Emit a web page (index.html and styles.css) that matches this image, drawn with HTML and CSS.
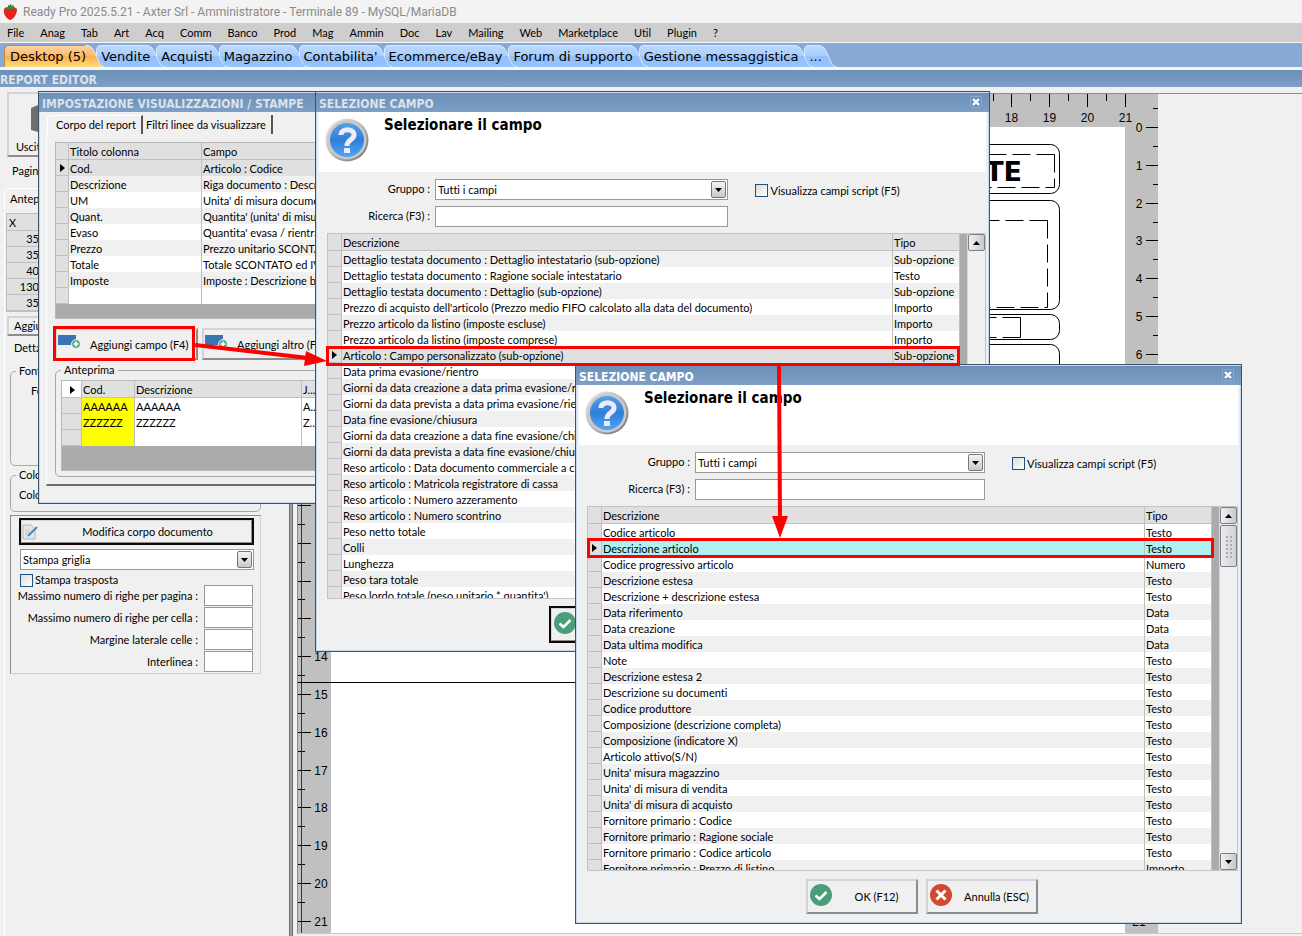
FILE: index.html
```
<!DOCTYPE html>
<html lang="it">
<head>
  <meta charset="UTF-8">
  <title>Ready Pro 2025.5.21</title>
  <link rel="stylesheet" href="styles.css">
</head>
<body>
  <svg class="defs" aria-hidden="true">
    <defs>
      <linearGradient id="tabBlue" x1="0" y1="0" x2="0" y2="1">
        <stop offset="0" stop-color="#bcd9ff"/>
        <stop offset="0.48" stop-color="#a8cdfb"/>
        <stop offset="0.52" stop-color="#94c0fa"/>
        <stop offset="1" stop-color="#94c3ff"/>
      </linearGradient>
      <linearGradient id="tabOrange" x1="0" y1="0" x2="0" y2="1">
        <stop offset="0" stop-color="#fdd3a0"/>
        <stop offset="0.45" stop-color="#fdbb70"/>
        <stop offset="0.52" stop-color="#fdac50"/>
        <stop offset="1" stop-color="#ffdd77"/>
      </linearGradient>
      <linearGradient id="ring" x1="0" y1="0" x2="1" y2="1">
        <stop offset="0" stop-color="#f2f2f2"/>
        <stop offset="0.5" stop-color="#b9b9b9"/>
        <stop offset="1" stop-color="#6b6b6b"/>
      </linearGradient>
      <linearGradient id="ball" x1="0" y1="0" x2="0" y2="1">
        <stop offset="0" stop-color="#5a9fe4"/>
        <stop offset="0.5" stop-color="#2f7fd8"/>
        <stop offset="1" stop-color="#4fa6f5"/>
      </linearGradient>
      <symbol id="tail" viewBox="0 0 20 22" preserveAspectRatio="none">
        <path d="M0 0 C7 0 8 4 11 10 C14 17 15 21 20 22 L0 22 Z"/>
        <path d="M0 .5 C7 .5 8 4 11 10 C14 17 15 21 20 22" fill="none" stroke="#d9e9ff"/>
      </symbol>
      <symbol id="question" viewBox="0 0 44 44">
        <circle cx="22" cy="22" r="21.5" fill="url(#ring)"/>
        <circle cx="22" cy="22" r="19.5" fill="#c9c9c9"/>
        <circle cx="22" cy="22" r="17" fill="url(#ball)"/>
        <path d="M16 17 C16 10 29 10 29 17 C29 22 22 21 22 28" fill="none" stroke="#eeecfb" stroke-width="5"/>
        <rect x="19" y="30" width="6" height="5" fill="#eeecfb"/>
      </symbol>
      <symbol id="ok" viewBox="0 0 22 22">
        <circle cx="11" cy="11" r="11" fill="#4a9e7c"/>
        <path d="M5.5 11.5 L9.5 15 L16.5 8" fill="none" stroke="#fff" stroke-width="2.6"/>
      </symbol>
      <symbol id="cancel" viewBox="0 0 22 22">
        <circle cx="11" cy="11" r="11" fill="#cf4a2e"/>
        <path d="M6.5 6.5 L15.5 15.5 M15.5 6.5 L6.5 15.5" stroke="#fff" stroke-width="3"/>
      </symbol>
      <symbol id="addcol" viewBox="0 0 22 14">
        <rect width="18" height="10" fill="#3a74b5"/>
        <circle cx="18" cy="9" r="4.5" fill="#5aaa88" stroke="#e4f0ea"/>
        <path d="M18 6.5 V11.5 M15.5 9 H20.5" stroke="#fff" stroke-width="1.6"/>
      </symbol>
      <symbol id="close" viewBox="0 0 12 12">
        <rect x=".5" y=".5" width="11" height="11" rx="1" fill="#6a92bd" stroke="#8badcf"/>
        <path d="M3 3 L9 9 M9 3 L3 9" stroke="#fff" stroke-width="2.4"/>
      </symbol>
      <symbol id="down" viewBox="0 0 7 4"><path d="M0 0 H7 L3.5 4 Z"/></symbol>
      <symbol id="up" viewBox="0 0 7 4"><path d="M0 4 H7 L3.5 0 Z"/></symbol>
    </defs>
  </svg>

  <header class="titlebar">
    <svg width="16" height="18" viewBox="0 0 16 18">
      <path d="M2 6 C4 3 12 3 15 6 C15 11 12 16 8 17 C4 15 1 11 2 6 Z" fill="#e3241c"/>
      <path d="M3 5 L6 4 L6 2 L9 3 L11 2 L13 5 L9 6 L6 6 Z" fill="#2f8f2f"/>
      <path d="M8 4 L9 1" stroke="#2f6f2f"/>
    </svg>
    <span>Ready Pro 2025.5.21 - Axter Srl - Amministratore - Terminale 89 - MySQL/MariaDB</span>
  </header>

  <nav class="menubar">
    <a href="#">File</a><a href="#">Anag</a><a href="#">Tab</a><a href="#">Art</a><a href="#">Acq</a><a href="#">Comm</a><a href="#">Banco</a><a href="#">Prod</a><a href="#">Mag</a><a href="#">Ammin</a><a href="#">Doc</a><a href="#">Lav</a><a href="#">Mailing</a><a href="#">Web</a><a href="#">Marketplace</a><a href="#">Util</a><a href="#">Plugin</a><a href="#">?</a>
  </nav>

  <nav class="main-tabs">
    <a href="#" class="active"><svg class="tail"><use href="#tail"/></svg>Desktop (5)</a>
    <a href="#"><svg class="tail"><use href="#tail"/></svg>Vendite</a>
    <a href="#"><svg class="tail"><use href="#tail"/></svg>Acquisti</a>
    <a href="#"><svg class="tail"><use href="#tail"/></svg>Magazzino</a>
    <a href="#"><svg class="tail"><use href="#tail"/></svg>Contabilita'</a>
    <a href="#"><svg class="tail"><use href="#tail"/></svg>Ecommerce/eBay</a>
    <a href="#"><svg class="tail"><use href="#tail"/></svg>Forum di supporto</a>
    <a href="#"><svg class="tail"><use href="#tail"/></svg>Gestione messaggistica</a>
    <a href="#"><svg class="tail"><use href="#tail"/></svg>...</a>
  </nav>

  <h1 class="bar">REPORT EDITOR</h1>

  <main class="workspace">
    <aside class="side">
      <button class="btn exit">
        <svg width="30" height="32" viewBox="0 0 30 32"><path d="M0 6 L14 0 L30 4 L30 28 L14 32 L0 28 Z" fill="#6e6e6e"/></svg>
        Uscita
      </button>
      <p class="page-label">Pagina</p>
      <div class="side-tab">Anteprima</div>
      <div class="side-page">
        <table class="grid coords">
          <thead><tr><th>X</th></tr></thead>
          <tbody>
            <tr><td>35</td></tr><tr><td>35</td></tr><tr><td>40</td></tr><tr><td>130</td></tr><tr><td>35</td></tr>
          </tbody>
        </table>
        <button class="btn add">Aggiungi</button>
        <p class="detail-label">Dettaglio</p>
        <fieldset class="group font-group"><legend>Font</legend><p>Font</p></fieldset>
        <fieldset class="group color-group"><legend>Colori</legend><p>Colore</p></fieldset>

        <section class="inset">
          <button class="btn default modify">
            <svg width="16" height="16" viewBox="0 0 16 16">
              <path d="M1 1 H9 L13 5 V15 H1 Z" fill="#e4e6e8" stroke="#b5b8bb"/>
              <path d="M3 6 H8 M3 8 H8 M3 10 H7" stroke="#c3c6c9"/>
              <path d="M6 12 L15 3" stroke="#4a86c0" stroke-width="2"/>
            </svg>
            <span>Modifica corpo documento</span>
          </button>
          <span class="combo">
            <select aria-label="Tipo di stampa"><option>Stampa griglia</option></select>
            <i><svg width="7" height="4"><use href="#down"/></svg></i>
          </span>
          <label class="check"><input type="checkbox">Stampa trasposta</label>
          <div class="numbers">
            <label for="maxPagina">Massimo numero di righe per pagina :</label><input id="maxPagina" type="text">
            <label for="maxCella">Massimo numero di righe per cella :</label><input id="maxCella" type="text">
            <label for="margine">Margine laterale celle :</label><input id="margine" type="text">
            <label for="interlinea">Interlinea :</label><input id="interlinea" type="text">
          </div>
        </section>
      </div>
    </aside>

    <div class="splitter"></div>

    <section class="sheet">
      <svg id="sheet" width="860" height="840" viewBox="-33 -33 860 840">
        <rect x="-33" y="-33" width="860" height="840" fill="#c0c0c0"/>
        <rect x="0" y="0" width="794" height="807" fill="#fff"/>
        <g id="ticks" stroke="#000" shape-rendering="crispEdges"></g>
        <g id="numbers" class="ruler-text"></g>
        <path d="M-29.5 -33 V807" stroke="#333"/>
        <path d="M-33 555.5 H794" stroke="#000"/>
        <g fill="none" stroke="#000">
          <rect x="30.5" y="17.5" width="698" height="49" rx="9"/>
          <rect x="30.5" y="73.5" width="698" height="109" rx="9"/>
          <rect x="30.5" y="187.5" width="698" height="25" rx="9"/>
          <rect x="30.5" y="217.5" width="698" height="290" rx="9"/>
          <g stroke-dasharray="18 6">
            <path d="M723.5 27.5 V60.5 H400"/>
            <path d="M723.5 27.5 H400"/>
            <path d="M716.5 93.5 V180.5 H400"/>
            <path d="M716.5 93.5 H400"/>
            <path d="M689.5 190.5 H600"/>
            <path d="M689.5 210.5 H600"/>
          </g>
          <path d="M689.5 190.5 V210.5"/>
        </g>
        <text class="doc-title" x="691" y="54" text-anchor="end">CLIENTE</text>
      </svg>
    </section>

    <section class="window win-settings">
      <h2>IMPOSTAZIONE VISUALIZZAZIONI / STAMPE</h2>
      <div class="tabs"><button class="on">Corpo del report</button><button>Filtri linee da visualizzare</button></div>
      <div class="tab-page">
        <div class="list">
          <table class="grid columns">
            <colgroup><col class="c-ind"><col class="c-title"><col></colgroup>
            <thead><tr><th></th><th>Titolo colonna</th><th>Campo</th></tr></thead>
            <tbody>
              <tr class="current"><td></td><td>Cod.</td><td>Articolo : Codice</td></tr>
              <tr class="alt"><td></td><td>Descrizione</td><td>Riga documento : Descrizione</td></tr>
              <tr><td></td><td>UM</td><td>Unita' di misura documento</td></tr>
              <tr class="alt"><td></td><td>Quant.</td><td>Quantita' (unita' di misura documento)</td></tr>
              <tr><td></td><td>Evaso</td><td>Quantita' evasa / rientrata</td></tr>
              <tr class="alt"><td></td><td>Prezzo</td><td>Prezzo unitario SCONTATO</td></tr>
              <tr><td></td><td>Totale</td><td>Totale SCONTATO ed IVATO</td></tr>
              <tr class="alt"><td></td><td>Imposte</td><td>Imposte : Descrizione breve</td></tr>
              <tr><td></td><td></td><td></td></tr>
            </tbody>
          </table>
        </div>
        <div class="actions">
          <button class="btn"><svg width="22" height="14"><use href="#addcol"/></svg>Aggiungi campo (F4)</button>
          <button class="btn"><svg width="22" height="14"><use href="#addcol"/></svg>Aggiungi altro (F5)</button>
        </div>
        <fieldset class="group preview">
          <legend>Anteprima</legend>
          <div class="list">
            <table class="grid sample">
              <colgroup><col class="c-ind"><col class="c-cod"><col class="c-desc"><col></colgroup>
              <thead><tr class="current"><th></th><th>Cod.</th><th>Descrizione</th><th>J...</th></tr></thead>
              <tbody>
                <tr><td></td><td class="key">AAAAAA</td><td>AAAAAA</td><td>A...</td></tr>
                <tr><td></td><td class="key">ZZZZZZ</td><td>ZZZZZZ</td><td>Z...</td></tr>
                <tr><td></td><td class="key"></td><td></td><td></td></tr>
              </tbody>
            </table>
          </div>
        </fieldset>
      </div>
    </section>

    <section class="window picker win-first">
      <h2>SELEZIONE CAMPO<button class="close" aria-label="Chiudi"><svg width="12" height="12"><use href="#close"/></svg></button></h2>
      <div class="banner"><svg width="44" height="44"><use href="#question"/></svg><h3>Selezionare il campo</h3></div>
      <div class="filters">
        <label for="gruppo1">Gruppo :</label>
        <span class="combo"><select id="gruppo1"><option>Tutti i campi</option></select><i><svg width="7" height="4"><use href="#down"/></svg></i></span>
        <label class="check"><input type="checkbox">Visualizza campi script (F5)</label>
        <label for="ricerca1">Ricerca (F3) :</label>
        <input id="ricerca1" type="text">
      </div>
      <div class="list">
        <div class="rows">
          <table class="grid fields">
            <colgroup><col class="c-ind"><col><col class="c-type"></colgroup>
            <thead><tr><th></th><th>Descrizione</th><th>Tipo</th></tr></thead>
            <tbody id="fields1"></tbody>
          </table>
        </div>
        <div class="scroll"><button aria-label="Su"><svg width="7" height="4"><use href="#up"/></svg></button><span></span><button aria-label="Giu'"><svg width="7" height="4"><use href="#down"/></svg></button></div>
      </div>
      <div class="buttons">
        <button class="btn default"><svg width="22" height="22"><use href="#ok"/></svg><span>OK (F12)</span></button>
        <button class="btn"><svg width="22" height="22"><use href="#cancel"/></svg><span>Annulla (ESC)</span></button>
      </div>
    </section>

    <section class="window picker win-second">
      <h2>SELEZIONE CAMPO<button class="close" aria-label="Chiudi"><svg width="12" height="12"><use href="#close"/></svg></button></h2>
      <div class="banner"><svg width="44" height="44"><use href="#question"/></svg><h3>Selezionare il campo</h3></div>
      <div class="filters">
        <label for="gruppo2">Gruppo :</label>
        <span class="combo"><select id="gruppo2"><option>Tutti i campi</option></select><i><svg width="7" height="4"><use href="#down"/></svg></i></span>
        <label class="check"><input type="checkbox">Visualizza campi script (F5)</label>
        <label for="ricerca2">Ricerca (F3) :</label>
        <input id="ricerca2" type="text">
      </div>
      <div class="list">
        <div class="rows">
          <table class="grid fields">
            <colgroup><col class="c-ind"><col><col class="c-type"></colgroup>
            <thead><tr><th></th><th>Descrizione</th><th>Tipo</th></tr></thead>
            <tbody id="fields2"></tbody>
          </table>
        </div>
        <div class="scroll"><button aria-label="Su"><svg width="7" height="4"><use href="#up"/></svg></button><span class="thumb"></span><span></span><button aria-label="Giu'"><svg width="7" height="4"><use href="#down"/></svg></button></div>
      </div>
      <div class="buttons">
        <button class="btn"><svg width="22" height="22"><use href="#ok"/></svg><span>OK (F12)</span></button>
        <button class="btn"><svg width="22" height="22"><use href="#cancel"/></svg><span>Annulla (ESC)</span></button>
      </div>
    </section>

    <svg class="marks" width="1302" height="849" viewBox="0 87 1302 849">
      <g fill="none" stroke="#f00" stroke-width="3">
        <rect x="54.5" y="327.5" width="139" height="32"/>
        <rect x="327.5" y="347.5" width="631" height="17"/>
        <rect x="588.5" y="539.5" width="624" height="17"/>
        <path d="M195 345 L308 358" stroke-width="4"/>
        <path d="M779 366 L780 520" stroke-width="4"/>
      </g>
      <path d="M306 351 L327 361 L304 366 Z M772 516 H788 L780 538 Z" fill="#f00"/>
    </svg>
  </main>

  <script>
    const fields1 = [
      ['Dettaglio testata documento : Dettaglio intestatario (sub-opzione)', 'Sub-opzione'],
      ['Dettaglio testata documento : Ragione sociale intestatario', 'Testo'],
      ['Dettaglio testata documento : Dettaglio (sub-opzione)', 'Sub-opzione'],
      ["Prezzo di acquisto dell'articolo (Prezzo medio FIFO calcolato alla data del documento)", 'Importo'],
      ['Prezzo articolo da listino (imposte escluse)', 'Importo'],
      ['Prezzo articolo da listino (imposte comprese)', 'Importo'],
      ['Articolo : Campo personalizzato (sub-opzione)', 'Sub-opzione'],
      ['Data prima evasione/rientro', 'Data'],
      ['Giorni da data creazione a data prima evasione/rientro', 'Numero'],
      ['Giorni da data prevista a data prima evasione/rientro', 'Numero'],
      ['Data fine evasione/chiusura', 'Data'],
      ['Giorni da data creazione a data fine evasione/chiusura', 'Numero'],
      ['Giorni da data prevista a data fine evasione/chiusura', 'Numero'],
      ['Reso articolo : Data documento commerciale a cui si riferisce', 'Data'],
      ['Reso articolo : Matricola registratore di cassa', 'Testo'],
      ['Reso articolo : Numero azzeramento', 'Numero'],
      ['Reso articolo : Numero scontrino', 'Numero'],
      ['Peso netto totale', 'Numero'],
      ['Colli', 'Numero'],
      ['Lunghezza', 'Numero'],
      ['Peso tara totale', 'Numero'],
      ["Peso lordo totale (peso unitario * quantita')", 'Numero']
    ];
    const fields2 = [
      ['Codice articolo', 'Testo'],
      ['Descrizione articolo', 'Testo'],
      ['Codice progressivo articolo', 'Numero'],
      ['Descrizione estesa', 'Testo'],
      ['Descrizione + descrizione estesa', 'Testo'],
      ['Data riferimento', 'Data'],
      ['Data creazione', 'Data'],
      ['Data ultima modifica', 'Data'],
      ['Note', 'Testo'],
      ['Descrizione estesa 2', 'Testo'],
      ['Descrizione su documenti', 'Testo'],
      ['Codice produttore', 'Testo'],
      ['Composizione (descrizione completa)', 'Testo'],
      ['Composizione (indicatore X)', 'Testo'],
      ['Articolo attivo(S/N)', 'Testo'],
      ["Unita' misura magazzino", 'Testo'],
      ["Unita' di misura di vendita", 'Testo'],
      ["Unita' di misura di acquisto", 'Testo'],
      ['Fornitore primario : Codice', 'Testo'],
      ['Fornitore primario : Ragione sociale', 'Testo'],
      ['Fornitore primario : Codice articolo', 'Testo'],
      ['Fornitore primario : Prezzo di listino', 'Importo']
    ];

    // altStart: 0 = prima riga grigia, 1 = prima riga bianca
    function fillRows(id, rows, altStart, selected, selClass) {
      document.getElementById(id).innerHTML = rows.map(([name, type], i) => {
        const cls = i === selected ? selClass : (i % 2 === altStart ? 'alt' : '');
        return `<tr class="${cls}"><td></td><td>${name}</td><td>${type}</td></tr>`;
      }).join('');
    }
    fillRows('fields1', fields1, 0, 6, 'current');
    fillRows('fields2', fields2, 1, 1, 'current focus');

    // righelli: 37.8 px per centimetro
    const CM = 37.8;
    let ticks = '', numbers = '';
    for (let i = 0; i <= 42; i++) {
      const p = Math.round(i * CM / 2) + 0.5;
      const whole = i % 2 === 0;
      ticks += `<path d="M-33 ${p} H${whole ? -20 : -26} M827 ${p} H${whole ? 815 : 822} M${p} -33 V${whole ? -20 : -26}"/>`;
      if (whole) {
        numbers += `<text x="-10" y="${p + 4}">${i / 2}</text>`;
        numbers += `<text x="808" y="${p + 4}">${i / 2}</text>`;
        numbers += `<text x="${p}" y="-5">${i / 2}</text>`;
      }
    }
    ticks += '<path d="M827 -18.5 H822"/>';
    document.getElementById('ticks').innerHTML = ticks;
    document.getElementById('numbers').innerHTML = numbers;
  </script>
</body>
</html>
```
FILE: styles.css
```
:root {
  --face: #f0f0f0;
  --head: #e0e0e0;
  --line: #c0c0c4;
  --dark: #8c8c8c;
  --bar: linear-gradient(#6a8fb8, #7f9fc5);
}
* { box-sizing: border-box; }
body {
  margin: 0;
  height: 100vh;
  display: flex;
  flex-direction: column;
  overflow: hidden;
  background: var(--face);
  font: 11px/16px Lato, "DejaVu Sans Condensed", sans-serif;
  font-variant-ligatures: none;
  color: #000;
}
h1, h2, h3, p, fieldset { margin: 0; padding: 0; }
a { color: inherit; text-decoration: none; }
button, input, select { font: inherit; color: inherit; margin: 0; padding: 0; border-radius: 0; }
svg { display: block; flex: none; }
.defs { position: absolute; width: 0; height: 0; }

.titlebar {
  display: flex;
  align-items: center;
  gap: 5px;
  height: 23px;
  padding-left: 2px;
  background: #f3f3f3;
  font: 12px/24px Roboto, sans-serif;
  color: #8a8a8a;
}
.menubar {
  display: flex;
  gap: 16px;
  height: 20px;
  padding-left: 7px;
  background: #cecece;
  border-bottom: 1px solid #f8f8f8;
  line-height: 20px;
}

.main-tabs {
  display: flex;
  height: 27px;
  padding: 2px 0 0 4px;
  background: #86a9d6;
  border-bottom: 3px solid #f4f6fa;
  font: 13px/23px "DejaVu Sans", sans-serif;
}
.main-tabs a {
  position: relative;
  isolation: isolate;
  padding: 0 6px 0 5px;
  fill: url(#tabBlue);
}
.main-tabs a::before {
  content: "";
  position: absolute;
  z-index: -1;
  inset: 0 11px 0 0;
  border: 1px solid #d9e9ff;
  border-width: 1px 0 0 1px;
  border-radius: 5px 0 0 0;
  background: linear-gradient(#bcd9ff, #a8cdfb 48%, #94c0fa 52%, #94c3ff);
}
.main-tabs .tail {
  position: absolute;
  z-index: -1;
  right: -9px;
  top: 0;
  width: 20px;
  height: 22px;
}
.main-tabs .active { padding: 0 10px 0 6px; fill: url(#tabOrange); }
.main-tabs .active::before {
  border-color: #b98a5a;
  background: linear-gradient(#fdd3a0, #fdbb70 45%, #fdac50 52%, #ffdd77);
}
.main-tabs a:nth-child(1) { z-index: 9; }
.main-tabs a:nth-child(2) { z-index: 8; }
.main-tabs a:nth-child(3) { z-index: 7; }
.main-tabs a:nth-child(4) { z-index: 6; }
.main-tabs a:nth-child(5) { z-index: 5; }
.main-tabs a:nth-child(6) { z-index: 4; }
.main-tabs a:nth-child(7) { z-index: 3; }
.main-tabs a:nth-child(8) { z-index: 2; }

.bar, .window h2 {
  background: var(--bar);
  font: bold 12px/18px "DejaVu Sans Condensed", sans-serif;
  color: #dbe2ea;
  white-space: nowrap;
}
.bar { height: 17px; padding-top: 1px; }

.workspace {
  position: relative;
  flex: 1;
  min-height: 0;
  display: flex;
  padding-top: 5px;
}

/* pannello sinistro */
.side {
  flex: none;
  width: 289px;
  padding-left: 4px;
}
.btn {
  display: flex;
  align-items: center;
  background: var(--face);
  border: 2px solid;
  border-color: #d4d4d8 #8c8c8c #8c8c8c #d4d4d8;
  white-space: nowrap;
}
.btn.default { outline: 2px solid #100808; outline-offset: -1px; }
.exit {
  flex-direction: column;
  justify-content: space-between;
  align-items: flex-start;
  width: 80px;
  height: 65px;
  margin-left: 3px;
  padding: 8px 0 0 7px;
}
.exit svg { margin-left: 15px; }
.page-label { margin: 6px 0 0 8px; }
.side-tab {
  width: 80px;
  margin-top: 9px;
  padding: 2px 0 2px 5px;
  border: 1px solid #fff;
  border-bottom: 0;
  border-radius: 4px 4px 0 0;
}
.side-page {
  height: 730px;
  padding-left: 6px;
  border-left: 1px solid #fff;
  margin-top: 4px;
}
.grid {
  table-layout: fixed;
  width: 100%;
  border-collapse: separate;
  border-spacing: 0;
  background: #fff;
}
.grid th, .grid td {
  height: 16px;
  padding: 0 2px 0 1px;
  overflow: hidden;
  text-align: left;
  font-weight: normal;
  line-height: 15px;
  white-space: nowrap;
  border-right: 1px solid var(--line);
}
.grid th {
  height: 17px;
  padding-top: 1px;
  background: var(--head);
  border-bottom: 1px solid var(--line);
}
.grid td:first-child, .grid th:first-child {
  background: var(--head);
  border-bottom: 1px solid var(--line);
}
.grid .alt td { background: #f0f0f0; }
.grid .alt td:first-child { background: var(--head); }
.grid .current td { background: var(--head); }
.grid .focus td { background: #b0f0f0; }
.grid .focus td:first-child { background: var(--head); }
.grid .current > :first-child::before {
  content: "";
  display: block;
  width: 0;
  height: 0;
  margin-left: 3px;
  border: solid transparent;
  border-width: 4px 0 4px 5px;
  border-left-color: #000;
}
.grid.coords { width: 50px; margin: 0 0 0 -5px; border: 1px solid var(--line); }
.grid.coords th { padding-left: 2px; }
.grid.coords td { text-align: right; padding-right: 15px; background: var(--head); }
.add { width: 60px; height: 20px; margin: 4px 0 0 -4px; padding-left: 5px; }
.detail-label { margin: 4px 0 0 3px; }
.group {
  border: 1px solid #a8a8a8;
  border-radius: 5px;
}
.group legend { margin-left: 5px; padding: 0 3px; line-height: 14px; }
.font-group { width: 251px; height: 102px; margin-top: 8px; }
.font-group p { margin: 5px 0 0 20px; }
.color-group { width: 251px; height: 44px; margin-top: 2px; }
.color-group p { margin: 5px 0 0 8px; }
.side-page .group { margin-left: -1px; }
.inset {
  width: 251px;
  margin: 3px 0 0 -1px;
  padding: 3px 6px 1px 9px;
  border: 1px solid;
  border-color: #8c8c8c #d0d0d8 #d0d0d8 #8c8c8c;
}
.modify { width: 233px; height: 25px; padding: 0; }
.modify span { flex: 1; text-align: center; padding-left: 6px; }
.inset .combo { width: 234px; margin-top: 5px; }
.inset > .check { margin-top: 2px; }
.numbers {
  display: grid;
  grid-template-columns: 1fr 49px;
  gap: 1px 6px;
  margin: -3px 1px 0 -10px;
  text-align: right;
}
.numbers label { line-height: 21px; }

.combo { position: relative; display: block; }
.combo select {
  appearance: none;
  display: block;
  width: 100%;
  height: 21px;
  padding-left: 2px;
  border: 1px solid #989898;
  background: #fff;
}
.combo i {
  position: absolute;
  top: 2px;
  right: 2px;
  width: 15px;
  height: 17px;
  display: grid;
  place-items: center;
  border: 1px solid #777;
  border-radius: 2px;
  background: linear-gradient(#f4f4f6, #c8c8d0);
  pointer-events: none;
}
input[type="text"] {
  width: 100%;
  height: 21px;
  padding: 0 2px;
  border: 1px solid #989898;
  background: #fff;
}
.check { display: flex; align-items: center; gap: 2px; white-space: nowrap; }
.check input {
  appearance: none;
  width: 13px;
  height: 13px;
  border: 1px solid #1c5180;
  background: linear-gradient(135deg, #dcdcd8, #fff);
}

.splitter {
  flex: none;
  width: 4px;
  border: solid #6c6c6c;
  border-width: 0 1px;
  background: #a0a0a0;
}

/* foglio */
.sheet {
  flex: 1;
  min-width: 0;
  margin: 1px 0 2px 4px;
  overflow: hidden;
  border: 1px solid #8c8c8c;
  border-width: 1px 0 1px 1px;
  border-bottom-color: #c8c8d0;
}
.ruler-text {
  font: 12px "Liberation Sans", sans-serif;
  text-anchor: middle;
}
.doc-title { font: bold 27px "DejaVu Sans", sans-serif; }

/* finestre */
.window {
  position: absolute;
  background: var(--face);
  border: 1px solid #3d5368;
  box-shadow: inset 0 0 0 1px #c8d8e8;
}
.window h2 { margin-top: 1px; height: 19px; padding: 2px 3px 0; }
.win-settings { left: 38px; top: 4px; width: 640px; height: 413px; }
.win-first { left: 315px; top: 4px; width: 675px; height: 561px; }
.win-second { left: 575px; top: 277px; width: 667px; height: 560px; }
.win-second h2 { color: #fff; }

.tabs { display: flex; padding: 3px 0 0 8px; height: 22px; }
.tabs button {
  padding: 1px 5px 0 3px;
  border: 0;
  border-right: 2px solid #555;
  background: none;
  line-height: 16px;
}
.tabs button.on {
  padding: 0 5px 0 8px;
  border-top: 1px solid #fff;
  border-left: 1px solid #fff;
  border-radius: 4px 0 0 0;
}
.tab-page {
  height: 352px;
  margin-left: 7px;
  padding: 8px 0 0 8px;
  border-left: 1px solid #fff;
  border-bottom: 2px solid #6c6c6c;
}
.tab-page > .list { height: 177px; border: 1px solid #b8b8bc; background: #ababab; }
.tab-page .list { overflow: hidden; }
.columns .c-ind { width: 13px; }
.columns .c-title { width: 133px; }
.actions { display: flex; gap: 4px; padding-top: 9px; }
.actions .btn { width: 143px; height: 32px; gap: 10px; padding: 2px 0 0 1px; }
.actions .btn svg { margin-top: -6px; }
.preview { width: 600px; height: 114px; margin-top: 3px; }
.preview legend { padding: 0 3px; }
.preview .list { height: 91px; margin: 3px 0 0 5px; border: 1px solid #b8b8bc; background: #ababab; }
.sample .c-ind { width: 20px; }
.sample .c-cod { width: 53px; }
.sample .c-desc { width: 167px; }
.grid.sample th:first-child { background: #fff; }
.grid.sample th:first-child::before { margin-left: 7px; }
.sample .key { background: #ff0; }

.picker { display: flex; flex-direction: column; padding: 0 3px; }
.picker h2 { display: flex; justify-content: space-between; margin: 1px -3px 0; }
.close { display: flex; width: 12px; height: 12px; margin: 1px 4px 0 0; border: 0; background: none; }
.banner {
  display: flex;
  gap: 15px;
  height: 60px;
  padding: 6px 6px 0;
  background: #fff;
}
.banner h3 { margin-top: -3px; font: bold 15px/20px "DejaVu Sans Condensed", sans-serif; }
.filters {
  display: grid;
  grid-template-columns: 111px 44% 1fr;
  gap: 6px 5px;
  padding: 7px 0 6px;
  text-align: right;
}
.filters > label { line-height: 19px; }
.filters .combo { text-align: left; }
.filters .check { padding: 2px 0 0 22px; }
.picker .list {
  flex: 1;
  min-height: 0;
  display: flex;
  margin-left: 8px;
  border: 1px solid #c4c4c8;
  background: #f0f0f0;
}
.rows {
  flex: 1;
  overflow: hidden;
  background: #ababab;
  padding-right: 7px;
}
.fields .c-ind { width: 14px; }
.fields .c-type { width: 67px; }
.scroll { display: flex; flex-direction: column; width: 18px; border-left: 1px solid #d8d8dc; }
.scroll button, .thumb {
  display: grid;
  place-items: center;
  height: 17px;
  border: 1px solid #7c7c84;
  border-radius: 2px;
  background: linear-gradient(90deg, #f0f0f4, #c8c8d0);
}
.scroll span { flex: 1; }
.scroll .thumb { flex: none; height: 42px; margin-top: 1px; background: linear-gradient(90deg, #ececf0, #d0d0d8); }
.thumb::before {
  content: "";
  width: 7px;
  height: 23px;
  background: radial-gradient(circle, #aaa 1px, transparent 1px) 0 0 / 4px 4px;
}
.buttons { display: flex; justify-content: center; gap: 8px; padding: 8px 0 9px 26px; }
.buttons .btn { width: 112px; height: 35px; padding-left: 2px; }
.buttons .btn svg { margin-top: -4px; }
.buttons .btn span { flex: 1; padding-left: 6px; text-align: center; }

.marks { position: absolute; left: 0; top: 0; pointer-events: none; }
```
